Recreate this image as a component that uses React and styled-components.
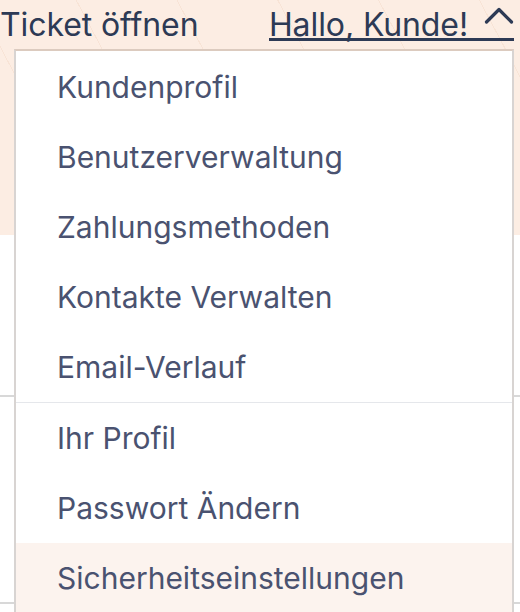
import styled, { createGlobalStyle } from "styled-components";

const GlobalStyle = createGlobalStyle`
  html, body {
    margin: 0;
    padding: 0;
    background: #ffffff;
    font-family: Inter, "Noto Sans", sans-serif;
    overflow: hidden;
  }
`;

const Page = styled.div`
  width: 520px;
  height: 612px;
  position: relative;
  overflow: hidden;
`;

const Hero = styled.section`
  height: 235px;
  background-color: #fcede3;
  background-image: repeating-linear-gradient(
    62deg,
    transparent 0,
    transparent 88px,
    rgba(236, 200, 175, 0.25) 88px,
    rgba(236, 200, 175, 0.25) 89px
  );
`;

const Header = styled.header`
  position: relative;
  display: flex;
  justify-content: space-between;
  align-items: flex-start;
  padding: 11px 6px 0 0;
`;

const Title = styled.span`
  font-size: 32px;
  line-height: 27px;
  color: #2d3a55;
  letter-spacing: -0.1px;
`;

const UserButton = styled.button`
  display: flex;
  align-items: flex-start;
  gap: 16px;
  padding: 0;
  margin: 0;
  background: none;
  border: none;
  border-bottom: 3px solid #2d3a55;
  font-family: inherit;
  font-size: 32px;
  line-height: 27px;
  color: #2d3a55;
  letter-spacing: -0.1px;
  cursor: pointer;
`;

const Chevron = styled.svg`
  width: 30px;
  height: 22px;
  margin-top: -6px;
`;

const Menu = styled.ul`
  position: absolute;
  top: 49px;
  right: 6px;
  width: 500px;
  box-sizing: border-box;
  margin: 0;
  padding: 1px 0 0;
  list-style: none;
  background: #ffffff;
  border: 2px solid #d8d4d2;
  border-top-color: #dccbbf;
`;

const Group = styled.div`
  & + & {
    border-top: 1px solid #e5e7eb;
  }
`;

const Item = styled.li`
  height: 70px;
  display: flex;
  align-items: center;
  padding-left: 41px;
  font-size: 30px;
  color: #4a5270;
  background: ${(props) => (props.$active ? "#fcf3ee" : "transparent")};
  cursor: pointer;
`;

const Rule = styled.hr`
  margin: 0;
  border: none;
  border-top: 2px solid #d8d8d8;
`;

const Body = styled.section`
  padding-top: 160px;
`;

const LowerRule = styled(Rule)`
  margin-top: 205px;
`;

const groups = [
  [
    "Kundenprofil",
    "Benutzerverwaltung",
    "Zahlungsmethoden",
    "Kontakte Verwalten",
    "Email-Verlauf",
  ],
  ["Ihr Profil", "Passwort Ändern", "Sicherheitseinstellungen"],
];

export default function App() {
  return (
    <Page>
      <GlobalStyle />
      <Hero>
        <Header>
          <Title>Ticket öffnen</Title>
          <UserButton>
            Hallo, Kunde!
            <Chevron viewBox="0 0 30 22" fill="none">
              <path
                d="M2.5 17 L15 4.5 L27.5 17"
                stroke="#2d3a55"
                strokeWidth="3.2"
                strokeLinecap="round"
                strokeLinejoin="round"
              />
            </Chevron>
          </UserButton>
          <Menu>
            {groups.map((items, gi) => (
              <Group key={gi}>
                {items.map((label) => (
                  <Item key={label} $active={label === "Sicherheitseinstellungen"}>
                    {label}
                  </Item>
                ))}
              </Group>
            ))}
          </Menu>
        </Header>
      </Hero>
      <Body>
        <Rule />
        <LowerRule />
      </Body>
    </Page>
  );
}
